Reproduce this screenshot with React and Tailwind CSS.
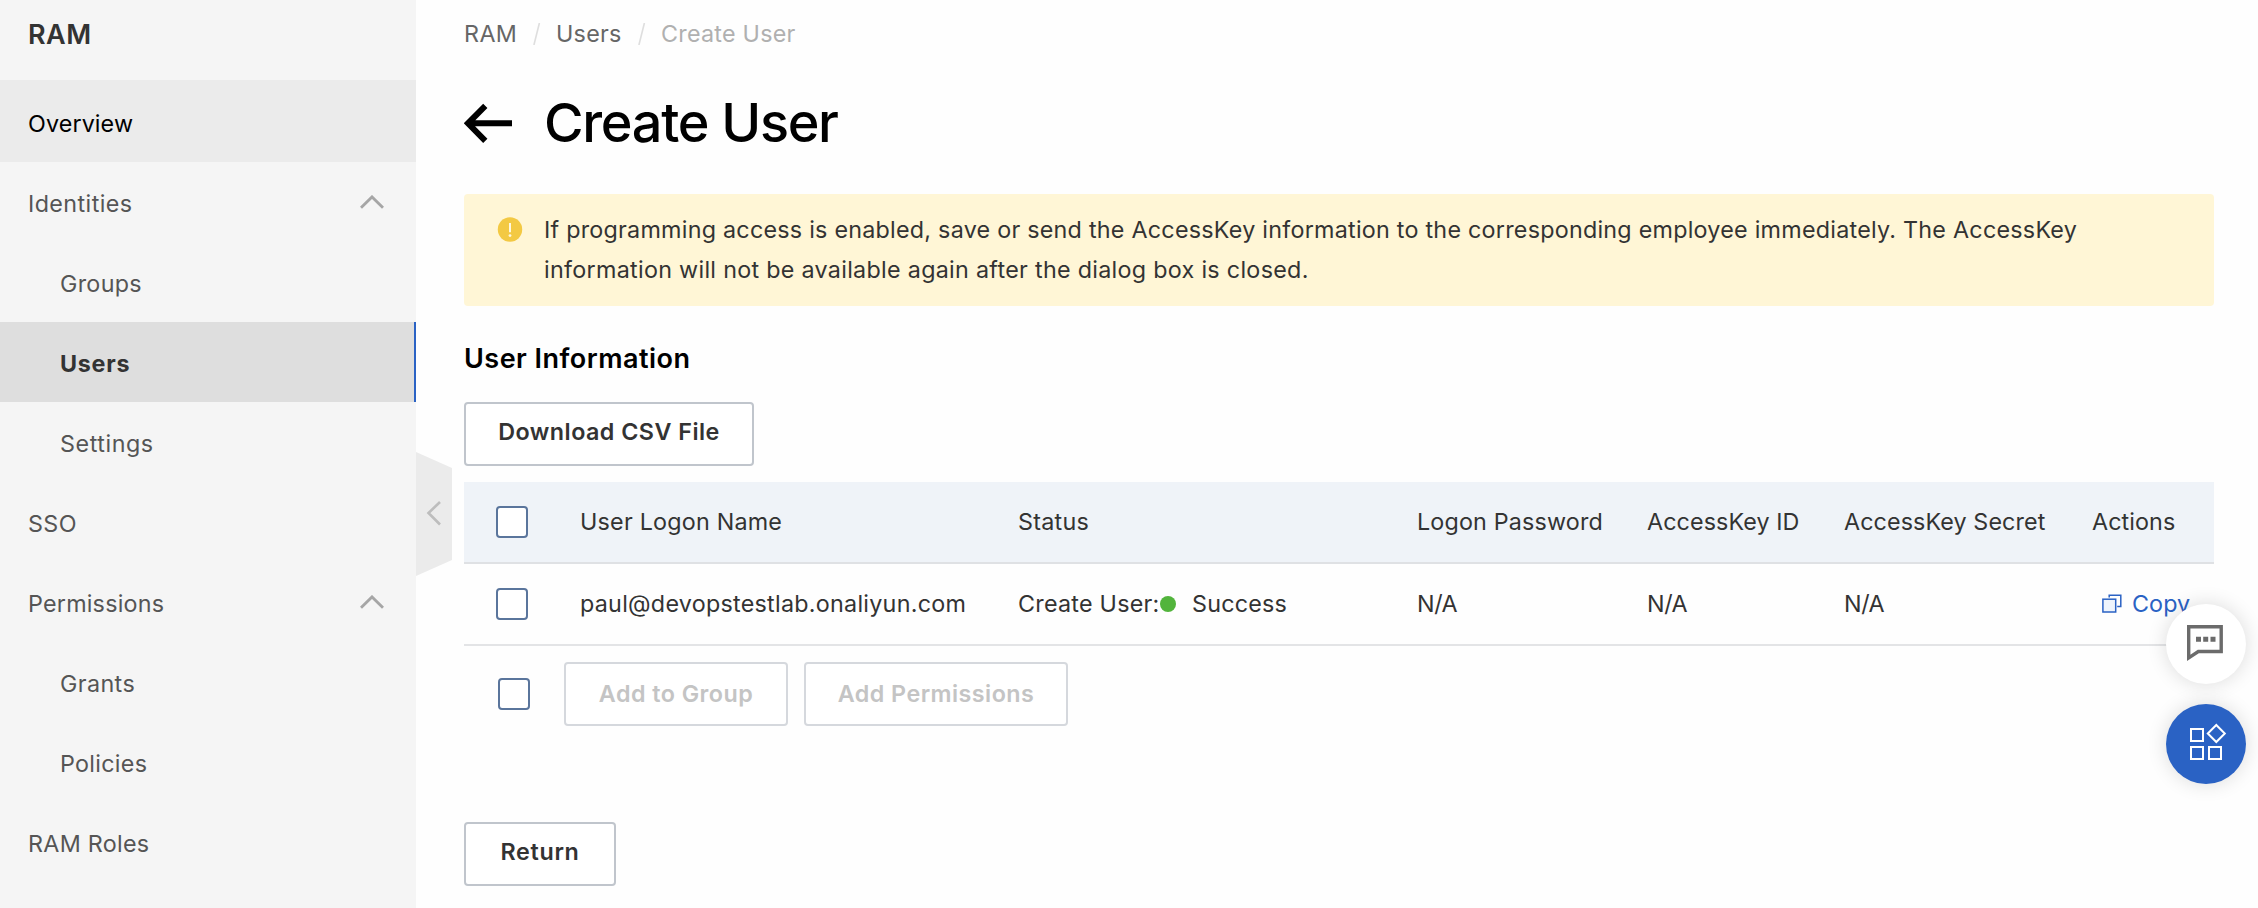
const NAV = [
  { label: "Overview", row: "h-[82px] pl-7 pt-1.5 bg-[#ebebeb] text-black", track: "tracking-[0.12px]" },
  { label: "Identities", row: "h-20 pl-7 pt-1 text-[#555]", track: "tracking-[0.42px]", open: true },
  { label: "Groups", row: "h-20 pl-[60px] pt-1 text-[#555]", track: "tracking-[0.3px]" },
  {
    label: "Users",
    row: "h-20 pl-[60px] pt-1 bg-[#dedede] font-bold text-[#333] border-r-2 border-[#2a62c4]",
    track: "tracking-[0.75px]",
  },
  { label: "Settings", row: "h-20 pl-[60px] pt-1 text-[#555]", track: "tracking-[0.56px]" },
  { label: "SSO", row: "h-20 pl-7 pt-1 text-[#555]", track: "tracking-[0.4px]" },
  { label: "Permissions", row: "h-20 pl-7 pt-1 text-[#555]", track: "tracking-[0.22px]", open: true },
  { label: "Grants", row: "h-20 pl-[60px] pt-1 text-[#555]", track: "tracking-[0.4px]" },
  { label: "Policies", row: "h-20 pl-[60px] pt-1 text-[#555]", track: "tracking-[0.3px]" },
  { label: "RAM Roles", row: "h-20 pl-7 pt-1 text-[#555]", track: "tracking-[0.28px]" },
];

function ChevronUp() {
  return (
    <svg width="24" height="14" viewBox="0 0 24 14" fill="none" stroke="#a6a6a6" strokeWidth="2.8">
      <path d="M1 12.8 12 1.9 23 12.8" />
    </svg>
  );
}

function Sidebar() {
  return (
    <aside className="relative w-[416px] shrink-0 bg-[#f5f5f5]">
      <div className="flex h-20 items-center pb-2.5 pl-7 text-[27px] font-semibold tracking-[0.5px] text-[#333]">RAM</div>
      <nav>
        {NAV.map((item) => (
          <a key={item.label} className={`flex items-center justify-between ${item.row}`}>
            <span className={item.track}>{item.label}</span>
            {item.open && (
              <span className="mr-8 pb-1">
                <ChevronUp />
              </span>
            )}
          </a>
        ))}
      </nav>
      <svg className="absolute left-full top-[452px]" width="36" height="124" viewBox="0 0 36 124" fill="none">
        <path d="M0 0 36 16V108L0 124Z" fill="#ebebeb" />
        <path d="M24 50 12.5 61 24 72.5" stroke="#bdbdbd" strokeWidth="2.6" />
      </svg>
    </aside>
  );
}

function Checkbox() {
  return <span className="block size-8 rounded-[4px] border-2 border-[#5a759c] bg-white" />;
}

const COLS = "grid grid-cols-[116px_438px_399px_230px_197px_248px_122px] items-center whitespace-nowrap";

function Table() {
  return (
    <div className="text-[#333]">
      <div className={`${COLS} h-[82px] border-b-2 border-[#dfe1e4] bg-[#eff3f8]`}>
        <span className="pl-8"><Checkbox /></span>
        <span className="tracking-[0.22px]">User Logon Name</span>
        <span className="tracking-[0.25px]">Status</span>
        <span className="tracking-[0.17px]">Logon Password</span>
        <span className="tracking-[0.09px]">AccessKey ID</span>
        <span className="tracking-[0.1px]">AccessKey Secret</span>
        <span className="tracking-[0.1px]">Actions</span>
      </div>
      <div className={`${COLS} h-[82px] border-b-2 border-[#e3e4e6]`}>
        <span className="pl-8"><Checkbox /></span>
        <span className="tracking-[0.27px]">paul@devopstestlab.onaliyun.com</span>
        <span className="flex items-center">
          <span className="w-[142px] tracking-[0.25px]">Create User:</span>
          <span className="mr-4 size-4 rounded-full bg-[#52b43c]" />
          <span className="tracking-[0.21px]">Success</span>
        </span>
        <span className="tracking-[-0.4px]">N/A</span>
        <span className="tracking-[-0.4px]">N/A</span>
        <span className="tracking-[-0.4px]">N/A</span>
        <span className="flex items-center pl-[10px] text-[#2a62c4]">
          <svg width="20" height="20" viewBox="0 0 20 20" fill="none" stroke="#2a62c4" strokeWidth="1.5">
            <path d="M7.2 3.4V1.2H18.8V12.6H15.2" />
            <rect x="0.9" y="5.2" width="12.8" height="12.8" fill="#eef4fc" />
          </svg>
          <span className="ml-[10px] tracking-[0.1px]">Copy</span>
        </span>
      </div>
    </div>
  );
}

const BTN = "flex h-16 items-center justify-center rounded-[4px] border-2 bg-white";

function FloatingTools() {
  return (
    <div className="absolute right-3 top-[604px] flex flex-col gap-5">
      <div className="flex size-20 rounded-full bg-white shadow-[0_0_20px_rgba(0,0,0,0.14)]">
        <svg width="80" height="80" viewBox="0 0 80 80" fill="none">
          <path d="M22.7 22.7H55.2V47.5H32.3L22.7 53.8Z" stroke="#6b6b6b" strokeWidth="3.4" />
          <path d="M30 32.7h5v5.1h-5zM37.2 32.7h5v5.1h-5zM44.5 32.7h5v5.1h-5z" fill="#6b6b6b" />
        </svg>
      </div>
      <div className="flex size-20 rounded-full bg-[#2a62c4] shadow-[0_0_20px_rgba(0,0,0,0.14)]">
        <svg width="80" height="80" viewBox="0 0 80 80" fill="none" stroke="#fff" strokeWidth="2">
          <path d="M25 25h12v12H25zM25 43h12v12H25zM43 43h12v12H43zM50.3 21l8.5 8.5-8.5 8.5-8.5-8.5z" />
        </svg>
      </div>
    </div>
  );
}

function Slash() {
  return (
    <svg className="mr-[15px] shrink-0" width="8" height="22" viewBox="0 0 8 22" fill="none" stroke="#dedede" strokeWidth="1.6">
      <path d="M6.4 0 .9 22" />
    </svg>
  );
}

export default function App() {
  return (
    <div className="relative flex h-[908px] w-[2258px] overflow-hidden bg-[#fefefe] font-['Inter',sans-serif] text-[23.3px]">
      <Sidebar />
      <main className="ml-12 w-[1750px]">
        <div className="flex h-[68px] items-center text-[#666]">
          <span className="w-[69px] tracking-[0.4px]">RAM</span>
          <Slash />
          <span className="w-[82px] tracking-[0.25px]">Users</span>
          <Slash />
          <span className="tracking-[0.25px] text-[#b0b0b0]">Create User</span>
        </div>
        <h1 className="flex h-[110px] items-center text-[54px] font-medium tracking-[-1.3px] text-black">
          <svg className="mr-8" width="48" height="40" viewBox="0 0 48 40" fill="none" stroke="#000" strokeWidth="6">
            <path d="M21.3 2.8 4 20.3 21.3 37.8M4 20.3H48" />
          </svg>
          <span className="pb-0.5">Create User</span>
        </h1>
        <div className="mt-4 flex h-28 rounded-[4px] bg-[#fff6d6] py-4 pl-[33px] leading-10 text-[#333]">
          <svg className="mr-[21px] mt-[7px] shrink-0" width="26" height="26" viewBox="0 0 26 26" fill="none">
            <circle cx="13" cy="12.5" r="12.2" fill="#f3c943" />
            <path d="M13 6v9.2" stroke="#fff8e0" strokeWidth="2" />
            <circle cx="13" cy="18.6" r="1.4" fill="#fff8e0" />
          </svg>
          <p className="w-[1560px] tracking-[0.25px]">
            If programming access is enabled, save or send the AccessKey information to the corresponding employee
            immediately. The AccessKey <span className="tracking-[0.3px]">information will not be available again after the dialog box is closed.</span>
          </p>
        </div>
        <h2 className="mt-[33px] text-[27px] font-semibold leading-10 tracking-[0.48px] text-black">User Information</h2>
        <button className={`${BTN} mt-[23px] w-[290px] border-[#c0c5cc] pb-1 font-semibold tracking-[0.47px] text-[#333]`}>
          Download CSV File
        </button>
        <div className="mt-4">
          <Table />
        </div>
        <div className="mt-4 flex items-center pl-[34px]">
          <Checkbox />
          <button className={`${BTN} ml-[34px] w-56 border-[#d5d8dd] font-semibold tracking-[0.46px] text-[#c4c4c4]`}>
            Add to Group
          </button>
          <button className={`${BTN} ml-4 w-[264px] border-[#d5d8dd] font-semibold tracking-[0.46px] text-[#c4c4c4]`}>
            Add Permissions
          </button>
        </div>
        <button className={`${BTN} mt-24 w-[152px] border-[#c0c5cc] pb-1 font-semibold tracking-[0.67px] text-[#333]`}>
          Return
        </button>
      </main>
      <FloatingTools />
    </div>
  );
}
